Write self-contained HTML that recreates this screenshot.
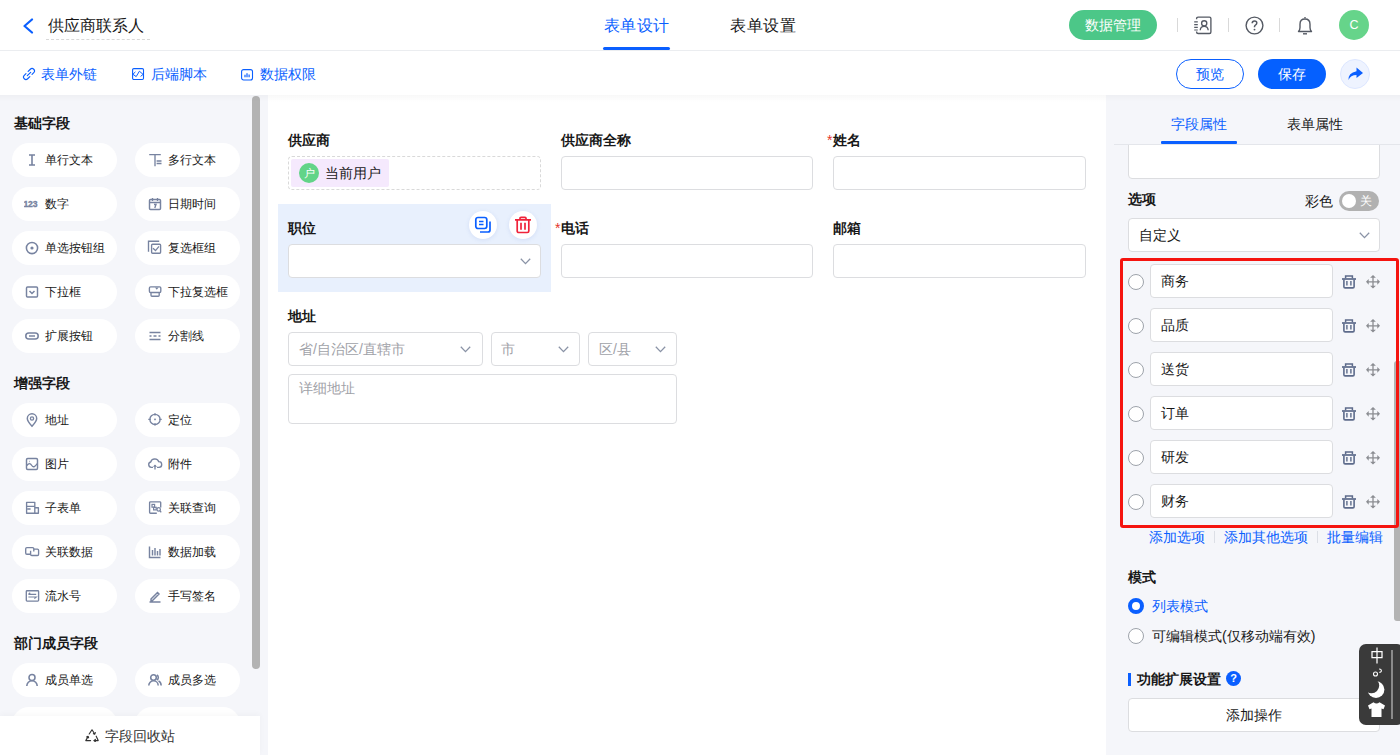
<!DOCTYPE html>
<html><head><meta charset="utf-8">
<style>
*{box-sizing:border-box;margin:0;padding:0}
html,body{width:1400px;height:755px;overflow:hidden;background:#fff;font-family:"Liberation Sans",sans-serif;color:#181818;position:relative}
.a{position:absolute}
svg{display:block}
/* header */
#hdr{left:0;top:0;width:1400px;height:51px;border-bottom:1px solid #ebedf0;background:#fff}
#tb{left:0;top:51px;width:1400px;height:44px;background:#fff}
#left{left:0;top:95px;width:268px;height:660px;background:#f5f6fa}
#canvas{left:268px;top:95px;width:838px;height:660px;background:#fff}
#right{left:1106px;top:95px;width:294px;height:660px;background:#f5f6fa}
.shadow{left:0;top:95px;width:1400px;height:7px;background:linear-gradient(rgba(0,0,0,0.028),rgba(0,0,0,0))}
.t14{font-size:14px;line-height:20px;white-space:nowrap}
.t13{font-size:13px;line-height:18px;white-space:nowrap}
.t16{font-size:16px;line-height:22px;white-space:nowrap}
.b{font-weight:bold}
.blue{color:#0a5fff}
.pill{width:105px;height:34px;border-radius:17px;background:#fff}
.pill .ic{position:absolute;left:12px;top:9px;width:16px;height:16px}
.pill span{position:absolute;left:33px;top:8px;font-size:12px;line-height:18px;color:#181818;white-space:nowrap}
.sec{left:14px;font-size:14px;font-weight:bold;line-height:18px;color:#181818}
.inp{border:1px solid #dcdde0;border-radius:4px;background:#fff}
.lbl{font-size:14px;font-weight:bold;line-height:20px;color:#181818;white-space:nowrap}
.req{color:#e5352b;font-weight:normal;margin-right:1px}
.chev{position:absolute;width:12px;height:12px}
</style></head><body>

<!-- header -->
<div id="hdr" class="a"></div>
<div class="a" style="left:20.5px;top:17.5px"><svg width="14" height="16" viewBox="0 0 14 16"><path d="M11 1.5 L3.5 8 L11 14.5" fill="none" stroke="#0a5fff" stroke-width="2.2" stroke-linecap="round" stroke-linejoin="round"/></svg></div>
<div class="a t16" style="left:48px;top:15px;color:#181818">供应商联系人</div>
<div class="a" style="left:46px;top:39px;width:104px;border-top:1px dashed #d8d8d8"></div>

<div class="a t16 blue" style="left:603.5px;top:15px;letter-spacing:0.5px">表单设计</div>
<div class="a" style="left:603px;top:47px;width:67px;height:3px;background:#0a5fff;border-radius:2px"></div>
<div class="a t16" style="left:730px;top:15px;letter-spacing:0.6px;color:#181818">表单设置</div>

<div class="a" style="left:1069px;top:10px;width:88px;height:30px;border-radius:15px;background:#4cc788"></div>
<div class="a t14" style="left:1085px;top:15px;color:#fff;font-weight:500">数据管理</div>
<div class="a" style="left:1177px;top:18px;width:1px;height:14px;background:#d9d9d9"></div>
<div class="a" style="left:1228px;top:18px;width:1px;height:14px;background:#d9d9d9"></div>
<div class="a" style="left:1279px;top:18px;width:1px;height:14px;background:#d9d9d9"></div>
<div class="a" style="left:1339px;top:10px;width:30px;height:30px;border-radius:50%;background:#66d48a;color:#fff;font-size:12.5px;line-height:31px;text-align:center">C</div>

<!-- toolbar -->
<div id="tb" class="a"></div>
<div class="a t14 blue" style="left:41px;top:64px">表单外链</div>
<div class="a t14 blue" style="left:151px;top:64px">后端脚本</div>
<div class="a t14 blue" style="left:260px;top:64px">数据权限</div>
<div class="a" style="left:1176px;top:59px;width:68px;height:30px;border-radius:15px;border:1px solid #0a5fff;background:#fff"></div>
<div class="a t14 blue" style="left:1196px;top:64px">预览</div>
<div class="a" style="left:1258px;top:59px;width:68px;height:30px;border-radius:15px;background:#0560ff"></div>
<div class="a t14" style="left:1278px;top:64px;color:#fff;font-weight:500">保存</div>
<div class="a" style="left:1340px;top:59px;width:30px;height:30px;border-radius:50%;background:#eef3ff;border:1px solid #dde7ff"></div>


<div class="a" style="left:22px;top:67px"><svg width="14" height="14" viewBox="0 0 14 14"><g transform="rotate(-45 7 7)" stroke="#0a5fff" stroke-width="1.15" fill="none" stroke-linecap="round"><path d="M8.2 4.6H11.3A2.4 2.4 0 0 1 11.3 9.4H8.9"/><path d="M5.8 9.4H2.7A2.4 2.4 0 0 1 2.7 4.6H5.1"/><path d="M4.6 7H9.4"/></g></svg></div>
<div class="a" style="left:131px;top:67px"><svg width="14" height="14" viewBox="0 0 14 14"><rect x="1.6" y="1.6" width="10.9" height="10.9" rx="1.2" stroke="#0a5fff" stroke-width="1.1" fill="none"/><path d="M4.4 4.9L1.9 7.3L5.2 9.6L8.4 4.2L12.1 7.4L9.6 9.4" stroke="#0a5fff" stroke-width="1" fill="none" stroke-linejoin="round"/></svg></div>
<div class="a" style="left:240px;top:68px"><svg width="14" height="13" viewBox="0 0 14 13"><rect x="1.6" y="1.6" width="10.9" height="10.4" rx="2" stroke="#0a5fff" stroke-width="1.1" fill="none"/><path d="M5 6.8v2.4M7 5.2v4M9.1 6.4v2.8" stroke="#0a5fff" stroke-width="1.2"/></svg></div>
<div class="a" style="left:1193px;top:16px"><svg width="20" height="19" viewBox="0 0 20 19"><path d="M3.6 3.2V2.6Q3.6 1.1 5.1 1.1H16.4Q17.9 1.1 17.9 2.6V16Q17.9 17.5 16.4 17.5H5.1Q3.6 17.5 3.6 16V15.4" stroke="#555a64" stroke-width="1.35" fill="none"/><path d="M1.2 5.9h3.6M1.2 8.6h3.6M1.2 11.3h3.6M1.2 14h3.6" stroke="#555a64" stroke-width="1.2"/><circle cx="11.2" cy="7.3" r="2.6" stroke="#555a64" stroke-width="1.35" fill="none"/><path d="M7.2 14.2Q7.6 10.4 11.2 10.4Q14.8 10.4 15.2 14.2" stroke="#555a64" stroke-width="1.35" fill="none"/></svg></div>
<div class="a" style="left:1245px;top:16px"><svg width="19" height="19" viewBox="0 0 19 19"><circle cx="9.5" cy="9.5" r="8.4" stroke="#555a64" stroke-width="1.4" fill="none"/><path d="M7.2 7.3Q7.2 5 9.5 5Q11.8 5 11.8 7.1Q11.8 8.4 10.4 9.1Q9.5 9.6 9.5 10.8V11.3" stroke="#555a64" stroke-width="1.5" fill="none"/><circle cx="9.5" cy="13.6" r="0.95" fill="#555a64"/></svg></div>
<div class="a" style="left:1297px;top:16px"><svg width="16" height="19" viewBox="0 0 16 19"><path d="M8 1v1.3" stroke="#555a64" stroke-width="1.4"/><path d="M1.5 15.5Q3 14 3 11.5V8.2Q3 3 8 3Q13 3 13 8.2V11.5Q13 14 14.5 15.5z" stroke="#555a64" stroke-width="1.4" fill="none" stroke-linejoin="round"/><path d="M6 17.8h4" stroke="#555a64" stroke-width="1.4"/></svg></div>
<div class="a" style="left:1345px;top:66px"><svg width="20" height="16" viewBox="0 0 20 16"><path d="M11.5 1.5L18 7 11.5 12V9Q5.5 9 3.5 14Q3 7 11.5 5.2z" fill="#0a5fff"/></svg></div>

<!-- panels -->
<div id="left" class="a"></div>
<div class="a sec" style="top:114px">基础字段</div>
<div class="a pill" style="left:12px;top:143px"><div class="ic"><svg width="16" height="16" viewBox="0 0 16 16"><path d="M5 3h6M5 13h6M8 3v10" stroke="#7783a0" stroke-width="1.60" fill="none"/></svg></div><span>单行文本</span></div>
<div class="a pill" style="left:135px;top:143px"><div class="ic"><svg width="16" height="16" viewBox="0 0 16 16"><path d="M2.2 2.6H13.8M8 2.6V14.2M9.6 9H14.5M9.6 11.5H14.5" stroke="#7783a0" stroke-width="1.35" fill="none"/></svg></div><span>多行文本</span></div>
<div class="a pill" style="left:12px;top:187px"><div class="ic"><svg width="16" height="16" viewBox="0 0 16 16"><text x="-0.5" y="11" font-family="Liberation Sans" font-weight="bold" font-size="8.6" fill="#7783a0" stroke="#7783a0" stroke-width="0.35" letter-spacing="-0.2">123</text></svg></div><span>数字</span></div>
<div class="a pill" style="left:135px;top:187px"><div class="ic"><svg width="16" height="16" viewBox="0 0 16 16"><rect x="2.5" y="3.5" width="11" height="10" rx="1" stroke="#7783a0" stroke-width="1.45" fill="none"/><path d="M2.5 6.5h11M5.5 2v3M10.5 2v3M7 8.5h2l-1.2 3.5" stroke="#7783a0" stroke-width="1.35" fill="none"/></svg></div><span>日期时间</span></div>
<div class="a pill" style="left:12px;top:231px"><div class="ic"><svg width="16" height="16" viewBox="0 0 16 16"><circle cx="8" cy="8" r="5.6" stroke="#7783a0" stroke-width="1.55" fill="none"/><circle cx="8" cy="8" r="1.6" fill="#7783a0"/></svg></div><span>单选按钮组</span></div>
<div class="a pill" style="left:135px;top:231px"><div class="ic"><svg width="16" height="16" viewBox="0 0 16 16"><path d="M1.5 11.7V1.2H12.2" stroke="#7783a0" stroke-width="1.35" fill="none"/><rect x="4.6" y="4.2" width="9" height="9" rx="1" stroke="#7783a0" stroke-width="1.35" fill="none"/><path d="M6 8.3L8.5 10.6L12 6.3" stroke="#7783a0" stroke-width="1.3" fill="none"/></svg></div><span>复选框组</span></div>
<div class="a pill" style="left:12px;top:275px"><div class="ic"><svg width="16" height="16" viewBox="0 0 16 16"><rect x="2.5" y="3" width="11" height="10" rx="1" stroke="#7783a0" stroke-width="1.45" fill="none"/><path d="M5.5 7l2.5 2.5L10.5 7" stroke="#7783a0" stroke-width="1.45" fill="none"/></svg></div><span>下拉框</span></div>
<div class="a pill" style="left:135px;top:275px"><div class="ic"><svg width="16" height="16" viewBox="0 0 16 16"><rect x="2.4" y="2.9" width="11.4" height="5.6" rx="1.2" stroke="#7783a0" stroke-width="1.35" fill="none"/><path d="M4 8.6V11.2Q4 12.2 5 12.2H11.2Q12.2 12.2 12.2 11.2V8.6" stroke="#7783a0" stroke-width="1.35" fill="none"/><path d="M8 3.4L9.8 5.8L11.6 3.4z" fill="#7783a0"/></svg></div><span>下拉复选框</span></div>
<div class="a pill" style="left:12px;top:319px"><div class="ic"><svg width="16" height="16" viewBox="0 0 16 16"><rect x="1.8" y="5" width="12.4" height="6" rx="3" stroke="#7783a0" stroke-width="1.55" fill="none"/><path d="M5 8h6" stroke="#7783a0" stroke-width="1.45"/></svg></div><span>扩展按钮</span></div>
<div class="a pill" style="left:135px;top:319px"><div class="ic"><svg width="16" height="16" viewBox="0 0 16 16"><path d="M2.5 4.5h11M2.5 11.5h11M2.5 8h2M6.5 8h3M11.5 8h2" stroke="#7783a0" stroke-width="1.45" fill="none"/></svg></div><span>分割线</span></div>
<div class="a sec" style="top:374px">增强字段</div>
<div class="a pill" style="left:12px;top:403px"><div class="ic"><svg width="16" height="16" viewBox="0 0 16 16"><path d="M8 14.2C5 11 3.3 8.8 3.3 6.5a4.7 4.7 0 0 1 9.4 0c0 2.3-1.7 4.5-4.7 7.7z" stroke="#7783a0" stroke-width="1.45" fill="none"/><circle cx="8" cy="6.5" r="1.6" stroke="#7783a0" stroke-width="1.35" fill="none"/></svg></div><span>地址</span></div>
<div class="a pill" style="left:135px;top:403px"><div class="ic"><svg width="16" height="16" viewBox="0 0 16 16"><circle cx="8" cy="7.4" r="5.1" stroke="#7783a0" stroke-width="1.35" fill="none"/><rect x="7.2" y="6.6" width="1.6" height="1.6" fill="#7783a0"/><path d="M8 1.2V3.6M8 11.2V13.6M1.3 7.4H3.7M12.3 7.4H14.7" stroke="#7783a0" stroke-width="1.35"/></svg></div><span>定位</span></div>
<div class="a pill" style="left:12px;top:447px"><div class="ic"><svg width="16" height="16" viewBox="0 0 16 16"><rect x="2.5" y="2.5" width="11" height="11" rx="1.2" stroke="#7783a0" stroke-width="1.45" fill="none"/><path d="M2.8 9.5c2-2.5 3.5-2.5 5 0s3.5 1 5.5-2M5 5.5h.5" stroke="#7783a0" stroke-width="1.35" fill="none"/></svg></div><span>图片</span></div>
<div class="a pill" style="left:135px;top:447px"><div class="ic"><svg width="16" height="16" viewBox="0 0 16 16"><path d="M6 11.3H4.3A2.7 2.7 0 0 1 3.7 6Q4.3 3 7.8 2.8Q11 3 11.8 5.7A2.8 2.8 0 0 1 12 11.3H10" stroke="#7783a0" stroke-width="1.35" fill="none"/><path d="M8 13.6V9.3" stroke="#7783a0" stroke-width="1.35"/><path d="M5.9 10.8L8 8.6L10.1 10.8z" fill="#7783a0"/></svg></div><span>附件</span></div>
<div class="a pill" style="left:12px;top:491px"><div class="ic"><svg width="16" height="16" viewBox="0 0 16 16"><path d="M2.6 2.3H10.8V13.2H2.6zM2.6 6.3H10.8M3.4 9H6.6M10.8 7.7H14.4V13.2H10.8" stroke="#7783a0" stroke-width="1.35" fill="none" stroke-linejoin="round"/></svg></div><span>子表单</span></div>
<div class="a pill" style="left:135px;top:491px"><div class="ic"><svg width="16" height="16" viewBox="0 0 16 16"><path d="M9.8 13.2H3.5Q2.6 13.2 2.6 12.3V2.6Q2.6 1.8 3.5 1.8H12.8Q13.7 1.8 13.7 2.6V7.5" stroke="#7783a0" stroke-width="1.35" fill="none"/><rect x="5" y="4.4" width="2.6" height="2.8" stroke="#7783a0" stroke-width="1.2" fill="none"/><rect x="6.6" y="7.3" width="2.6" height="2.6" stroke="#7783a0" stroke-width="1.2" fill="none"/><circle cx="11.7" cy="9.4" r="1.7" stroke="#7783a0" stroke-width="1.2" fill="none"/><path d="M12.9 10.7L14.2 12.4" stroke="#7783a0" stroke-width="1.3"/></svg></div><span>关联查询</span></div>
<div class="a pill" style="left:12px;top:535px"><div class="ic"><svg width="16" height="16" viewBox="0 0 16 16"><path d="M6.2 10.2H2.9Q1.7 10.2 1.7 9V4.8Q1.7 3.6 2.9 3.6H8.6Q9.8 3.6 9.8 4.8V7.4" stroke="#7783a0" stroke-width="1.35" fill="none"/><path d="M10 5.1H13.4Q14.6 5.1 14.6 6.3V10.3Q14.6 11.5 13.4 11.5H7.8Q6.6 11.5 6.6 10.3V6.8" stroke="#7783a0" stroke-width="1.35" fill="none"/></svg></div><span>关联数据</span></div>
<div class="a pill" style="left:135px;top:535px"><div class="ic"><svg width="16" height="16" viewBox="0 0 16 16"><path d="M2.5 2.5v11h11M5.5 6v5.5M8 4v7.5M10.5 7v4.5M13 5v6.5" stroke="#7783a0" stroke-width="1.45" fill="none"/></svg></div><span>数据加载</span></div>
<div class="a pill" style="left:12px;top:579px"><div class="ic"><svg width="16" height="16" viewBox="0 0 16 16"><rect x="2.3" y="2.7" width="12.3" height="10.4" rx="0.8" stroke="#7783a0" stroke-width="1.35" fill="none"/><path d="M4.4 6.4L6.2 4.8M4.4 6.4H12.2M4.4 9H12.2L10.4 10.6" stroke="#7783a0" stroke-width="1.2" fill="none"/></svg></div><span>流水号</span></div>
<div class="a pill" style="left:135px;top:579px"><div class="ic"><svg width="16" height="16" viewBox="0 0 16 16"><path d="M4 11l6.5-6.5 1.5 1.5L5.5 12.5H4zM2.5 14h11" stroke="#7783a0" stroke-width="1.45" fill="none"/></svg></div><span>手写签名</span></div>
<div class="a sec" style="top:634px">部门成员字段</div>
<div class="a pill" style="left:12px;top:663px"><div class="ic"><svg width="16" height="16" viewBox="0 0 16 16"><circle cx="8" cy="5.5" r="3" stroke="#7783a0" stroke-width="1.55" fill="none"/><path d="M2.8 14a5.2 5.2 0 0 1 10.4 0" stroke="#7783a0" stroke-width="1.55" fill="none"/></svg></div><span>成员单选</span></div>
<div class="a pill" style="left:135px;top:663px"><div class="ic"><svg width="16" height="16" viewBox="0 0 16 16"><circle cx="6.5" cy="5.5" r="2.8" stroke="#7783a0" stroke-width="1.55" fill="none"/><path d="M1.8 13.5a4.7 4.7 0 0 1 9.4 0M9.8 3a2.8 2.8 0 0 1 0 5M11.5 9c1.5.6 2.5 2.2 2.7 4.5" stroke="#7783a0" stroke-width="1.55" fill="none"/></svg></div><span>成员多选</span></div>
<div class="a pill" style="left:12px;top:707px"><div class="ic"></div><span></span></div>
<div class="a pill" style="left:135px;top:707px"><div class="ic"></div><span></span></div>
<div class="a" style="left:252px;top:96px;width:8px;height:573px;border-radius:4px;background:#b3b3b3"></div>
<div class="a" style="left:0;top:716px;width:260px;height:39px;background:#fff;box-shadow:0 -2px 6px rgba(0,0,0,0.03)"></div>
<div class="a" style="left:85px;top:729px"><svg width="14" height="13" viewBox="0 0 14 13"><g stroke="#333" stroke-width="1.15" fill="none" stroke-linejoin="round" stroke-linecap="round"><path d="M4.2 5L7 0.8L9.6 4.8"/><path d="M8.4 4.6L9.8 5.1L10.3 3.6"/><path d="M11.2 7.2L13.2 11.6H9.2"/><path d="M10.4 10.4L9 11.6L10.4 12.6"/><path d="M5.6 11.6H0.8L3 7.6"/><path d="M1.6 8L3 7.4L3.6 8.8"/></g></svg></div>
<div class="a t14" style="left:105px;top:726px;color:#333">字段回收站</div>

<div id="canvas" class="a"></div>

<div class="a lbl" style="left:288px;top:130px">供应商</div>
<div class="a" style="left:288px;top:156px;width:253px;height:34px;border:1px dashed #d9d9d9;border-radius:4px"></div>
<div class="a" style="left:291px;top:159px;width:98px;height:28px;background:#f5e9fd;border-radius:2px"></div>
<div class="a" style="left:299px;top:163px;width:20px;height:20px;border-radius:50%;background:#62d488;color:#fff;font-size:11px;line-height:20px;text-align:center">户</div>
<div class="a t14" style="left:325px;top:163px;color:#181818">当前用户</div>

<div class="a lbl" style="left:561px;top:130px">供应商全称</div>
<div class="a inp" style="left:561px;top:156px;width:252px;height:34px"></div>
<div class="a lbl" style="left:827px;top:130px"><span class="req">*</span>姓名</div>
<div class="a inp" style="left:833px;top:156px;width:253px;height:34px"></div>

<div class="a" style="left:278px;top:204px;width:273px;height:88px;background:#e8f0fd"></div>
<div class="a lbl" style="left:288px;top:218px">职位</div>
<div class="a" style="left:469px;top:211px;width:28px;height:28px;border-radius:50%;background:#fff;box-shadow:0 1px 4px rgba(60,100,200,0.12)"></div>
<div class="a" style="left:474px;top:216px"><svg width="18" height="18" viewBox="0 0 18 18"><rect x="1.8" y="1.5" width="11" height="11" rx="2.2" stroke="#0a5fff" stroke-width="1.7" fill="none"/><path d="M5 5.5h4.5M5 8.5h4.5" stroke="#0a5fff" stroke-width="1.6"/><path d="M16 5.5v8.5a2 2 0 0 1-2 2H6" stroke="#0a5fff" stroke-width="1.7" fill="none"/></svg></div>
<div class="a" style="left:509px;top:211px;width:28px;height:28px;border-radius:50%;background:#fff;box-shadow:0 1px 4px rgba(60,100,200,0.12)"></div>
<div class="a" style="left:514px;top:216px"><svg width="18" height="18" viewBox="0 0 18 18"><path d="M1 3.8h16M6 3.5V2.3a1 1 0 0 1 1-1h4a1 1 0 0 1 1 1v1.2M3.2 4v11a1.5 1.5 0 0 0 1.5 1.5h8.6a1.5 1.5 0 0 0 1.5-1.5V4M7 6.8v7M11 6.8v7" stroke="#f0233a" stroke-width="1.7" fill="none"/></svg></div>
<div class="a inp" style="left:288px;top:244px;width:253px;height:34px"></div>
<div class="a" style="left:520px;top:258px"><svg width="11" height="7" viewBox="0 0 11 7"><path d="M0.8 0.8L5.5 5.6L10.2 0.8" stroke="#8a93a6" stroke-width="1.3" fill="none"/></svg></div>

<div class="a lbl" style="left:555px;top:218px"><span class="req">*</span>电话</div>
<div class="a inp" style="left:561px;top:244px;width:252px;height:34px"></div>
<div class="a lbl" style="left:833px;top:218px">邮箱</div>
<div class="a inp" style="left:833px;top:244px;width:253px;height:34px"></div>

<div class="a lbl" style="left:288px;top:306px">地址</div>
<div class="a inp" style="left:288px;top:332px;width:195px;height:34px"></div>
<div class="a t14" style="left:299px;top:339px;color:#9fa2a8">省/自治区/直辖市</div>
<div class="a" style="left:460px;top:346px"><svg width="11" height="7" viewBox="0 0 11 7"><path d="M0.8 0.8L5.5 5.6L10.2 0.8" stroke="#8a93a6" stroke-width="1.3" fill="none"/></svg></div>
<div class="a inp" style="left:491px;top:332px;width:89px;height:34px"></div>
<div class="a t14" style="left:501px;top:339px;color:#9fa2a8">市</div>
<div class="a" style="left:558px;top:346px"><svg width="11" height="7" viewBox="0 0 11 7"><path d="M0.8 0.8L5.5 5.6L10.2 0.8" stroke="#8a93a6" stroke-width="1.3" fill="none"/></svg></div>
<div class="a inp" style="left:588px;top:332px;width:89px;height:34px"></div>
<div class="a t14" style="left:599px;top:339px;color:#9fa2a8">区/县</div>
<div class="a" style="left:655px;top:346px"><svg width="11" height="7" viewBox="0 0 11 7"><path d="M0.8 0.8L5.5 5.6L10.2 0.8" stroke="#8a93a6" stroke-width="1.3" fill="none"/></svg></div>
<div class="a inp" style="left:288px;top:374px;width:389px;height:50px"></div>
<div class="a t14" style="left:299px;top:378px;color:#9fa2a8">详细地址</div>

<div id="right" class="a"></div>


<div class="a inp" style="left:1128px;top:120px;width:252px;height:59px"></div>
<div class="a" style="left:1106px;top:96px;width:294px;height:48px;background:#f5f6fa"></div>
<div class="a" style="left:1114px;top:144px;width:286px;height:1px;background:#e4e6eb"></div>
<div class="a t14 blue" style="left:1171px;top:114px">字段属性</div>
<div class="a" style="left:1161px;top:141px;width:76px;height:3px;background:#0a5fff;border-radius:1px"></div>
<div class="a t14" style="left:1287px;top:114px;color:#181818">表单属性</div>

<div class="a lbl" style="left:1128px;top:189px">选项</div>
<div class="a t14" style="left:1305px;top:191px;color:#181818">彩色</div>
<div class="a" style="left:1339px;top:191px;width:40px;height:20px;border-radius:10px;background:#b1b1b1"></div>
<div class="a" style="left:1342px;top:194px;width:14px;height:14px;border-radius:50%;background:#fff"></div>
<div class="a" style="left:1360px;top:193px;font-size:12px;font-weight:500;line-height:17px;color:#fff">关</div>
<div class="a inp" style="left:1128px;top:218px;width:252px;height:34px"></div>
<div class="a t14" style="left:1139px;top:225px;color:#181818">自定义</div>
<div class="a" style="left:1359px;top:232px"><svg width="11" height="7" viewBox="0 0 11 7"><path d="M0.8 0.8L5.5 5.6L10.2 0.8" stroke="#8a93a6" stroke-width="1.3" fill="none"/></svg></div>

<div class="a" style="left:1394px;top:361px;width:6px;height:260px;background:#b3b3b3;border-radius:3px 0 0 3px"></div>
<div class="a" style="left:1120px;top:258px;width:279px;height:270px;border:3px solid #f5140f;border-radius:3px"></div>
<div class="a" style="left:1128px;top:274px;width:16px;height:16px;border-radius:50%;border:1px solid #9ea3ab;background:#fff"></div>
<div class="a inp" style="left:1150px;top:264px;width:183px;height:34px"></div>
<div class="a t14" style="left:1161px;top:271px;color:#181818">商务</div>
<div class="a" style="left:1342px;top:274px"><svg width="14" height="15" viewBox="0 0 14 15"><path d="M3.6 4.2V1.9H10.4V4.2" stroke="#5d6b8b" stroke-width="1.5" fill="none"/><path d="M0 5H14" stroke="#5d6b8b" stroke-width="1.7"/><path d="M1.9 5.5V12.7Q1.9 13.9 3.1 13.9H10.9Q12.1 13.9 12.1 12.7V5.5" stroke="#5d6b8b" stroke-width="1.6" fill="none"/><path d="M4.9 7v4.6M8.9 7v4.6" stroke="#5d6b8b" stroke-width="1.4"/></svg></div>
<div class="a" style="left:1366px;top:275px"><svg width="14" height="14" viewBox="0 0 14 14"><path d="M7 2v9.6M2 6.8h10" stroke="#8b8d92" stroke-width="1.3"/><path d="M7 0L4.1 2.7h5.8zM7 13.4L4.1 10.7h5.8zM0 6.8L2.7 3.9v5.8zM14 6.8L11.3 3.9v5.8z" fill="#8b8d92"/></svg></div>
<div class="a" style="left:1128px;top:318px;width:16px;height:16px;border-radius:50%;border:1px solid #9ea3ab;background:#fff"></div>
<div class="a inp" style="left:1150px;top:308px;width:183px;height:34px"></div>
<div class="a t14" style="left:1161px;top:315px;color:#181818">品质</div>
<div class="a" style="left:1342px;top:318px"><svg width="14" height="15" viewBox="0 0 14 15"><path d="M3.6 4.2V1.9H10.4V4.2" stroke="#5d6b8b" stroke-width="1.5" fill="none"/><path d="M0 5H14" stroke="#5d6b8b" stroke-width="1.7"/><path d="M1.9 5.5V12.7Q1.9 13.9 3.1 13.9H10.9Q12.1 13.9 12.1 12.7V5.5" stroke="#5d6b8b" stroke-width="1.6" fill="none"/><path d="M4.9 7v4.6M8.9 7v4.6" stroke="#5d6b8b" stroke-width="1.4"/></svg></div>
<div class="a" style="left:1366px;top:319px"><svg width="14" height="14" viewBox="0 0 14 14"><path d="M7 2v9.6M2 6.8h10" stroke="#8b8d92" stroke-width="1.3"/><path d="M7 0L4.1 2.7h5.8zM7 13.4L4.1 10.7h5.8zM0 6.8L2.7 3.9v5.8zM14 6.8L11.3 3.9v5.8z" fill="#8b8d92"/></svg></div>
<div class="a" style="left:1128px;top:362px;width:16px;height:16px;border-radius:50%;border:1px solid #9ea3ab;background:#fff"></div>
<div class="a inp" style="left:1150px;top:352px;width:183px;height:34px"></div>
<div class="a t14" style="left:1161px;top:359px;color:#181818">送货</div>
<div class="a" style="left:1342px;top:362px"><svg width="14" height="15" viewBox="0 0 14 15"><path d="M3.6 4.2V1.9H10.4V4.2" stroke="#5d6b8b" stroke-width="1.5" fill="none"/><path d="M0 5H14" stroke="#5d6b8b" stroke-width="1.7"/><path d="M1.9 5.5V12.7Q1.9 13.9 3.1 13.9H10.9Q12.1 13.9 12.1 12.7V5.5" stroke="#5d6b8b" stroke-width="1.6" fill="none"/><path d="M4.9 7v4.6M8.9 7v4.6" stroke="#5d6b8b" stroke-width="1.4"/></svg></div>
<div class="a" style="left:1366px;top:363px"><svg width="14" height="14" viewBox="0 0 14 14"><path d="M7 2v9.6M2 6.8h10" stroke="#8b8d92" stroke-width="1.3"/><path d="M7 0L4.1 2.7h5.8zM7 13.4L4.1 10.7h5.8zM0 6.8L2.7 3.9v5.8zM14 6.8L11.3 3.9v5.8z" fill="#8b8d92"/></svg></div>
<div class="a" style="left:1128px;top:406px;width:16px;height:16px;border-radius:50%;border:1px solid #9ea3ab;background:#fff"></div>
<div class="a inp" style="left:1150px;top:396px;width:183px;height:34px"></div>
<div class="a t14" style="left:1161px;top:403px;color:#181818">订单</div>
<div class="a" style="left:1342px;top:406px"><svg width="14" height="15" viewBox="0 0 14 15"><path d="M3.6 4.2V1.9H10.4V4.2" stroke="#5d6b8b" stroke-width="1.5" fill="none"/><path d="M0 5H14" stroke="#5d6b8b" stroke-width="1.7"/><path d="M1.9 5.5V12.7Q1.9 13.9 3.1 13.9H10.9Q12.1 13.9 12.1 12.7V5.5" stroke="#5d6b8b" stroke-width="1.6" fill="none"/><path d="M4.9 7v4.6M8.9 7v4.6" stroke="#5d6b8b" stroke-width="1.4"/></svg></div>
<div class="a" style="left:1366px;top:407px"><svg width="14" height="14" viewBox="0 0 14 14"><path d="M7 2v9.6M2 6.8h10" stroke="#8b8d92" stroke-width="1.3"/><path d="M7 0L4.1 2.7h5.8zM7 13.4L4.1 10.7h5.8zM0 6.8L2.7 3.9v5.8zM14 6.8L11.3 3.9v5.8z" fill="#8b8d92"/></svg></div>
<div class="a" style="left:1128px;top:450px;width:16px;height:16px;border-radius:50%;border:1px solid #9ea3ab;background:#fff"></div>
<div class="a inp" style="left:1150px;top:440px;width:183px;height:34px"></div>
<div class="a t14" style="left:1161px;top:447px;color:#181818">研发</div>
<div class="a" style="left:1342px;top:450px"><svg width="14" height="15" viewBox="0 0 14 15"><path d="M3.6 4.2V1.9H10.4V4.2" stroke="#5d6b8b" stroke-width="1.5" fill="none"/><path d="M0 5H14" stroke="#5d6b8b" stroke-width="1.7"/><path d="M1.9 5.5V12.7Q1.9 13.9 3.1 13.9H10.9Q12.1 13.9 12.1 12.7V5.5" stroke="#5d6b8b" stroke-width="1.6" fill="none"/><path d="M4.9 7v4.6M8.9 7v4.6" stroke="#5d6b8b" stroke-width="1.4"/></svg></div>
<div class="a" style="left:1366px;top:451px"><svg width="14" height="14" viewBox="0 0 14 14"><path d="M7 2v9.6M2 6.8h10" stroke="#8b8d92" stroke-width="1.3"/><path d="M7 0L4.1 2.7h5.8zM7 13.4L4.1 10.7h5.8zM0 6.8L2.7 3.9v5.8zM14 6.8L11.3 3.9v5.8z" fill="#8b8d92"/></svg></div>
<div class="a" style="left:1128px;top:494px;width:16px;height:16px;border-radius:50%;border:1px solid #9ea3ab;background:#fff"></div>
<div class="a inp" style="left:1150px;top:484px;width:183px;height:34px"></div>
<div class="a t14" style="left:1161px;top:491px;color:#181818">财务</div>
<div class="a" style="left:1342px;top:494px"><svg width="14" height="15" viewBox="0 0 14 15"><path d="M3.6 4.2V1.9H10.4V4.2" stroke="#5d6b8b" stroke-width="1.5" fill="none"/><path d="M0 5H14" stroke="#5d6b8b" stroke-width="1.7"/><path d="M1.9 5.5V12.7Q1.9 13.9 3.1 13.9H10.9Q12.1 13.9 12.1 12.7V5.5" stroke="#5d6b8b" stroke-width="1.6" fill="none"/><path d="M4.9 7v4.6M8.9 7v4.6" stroke="#5d6b8b" stroke-width="1.4"/></svg></div>
<div class="a" style="left:1366px;top:495px"><svg width="14" height="14" viewBox="0 0 14 14"><path d="M7 2v9.6M2 6.8h10" stroke="#8b8d92" stroke-width="1.3"/><path d="M7 0L4.1 2.7h5.8zM7 13.4L4.1 10.7h5.8zM0 6.8L2.7 3.9v5.8zM14 6.8L11.3 3.9v5.8z" fill="#8b8d92"/></svg></div>

<div class="a t14 blue" style="left:1149px;top:527px">添加选项</div>
<div class="a" style="left:1214px;top:531px;width:1px;height:12px;background:#dcdfe6"></div>
<div class="a t14 blue" style="left:1224px;top:527px">添加其他选项</div>
<div class="a" style="left:1317px;top:531px;width:1px;height:12px;background:#dcdfe6"></div>
<div class="a t14 blue" style="left:1327px;top:527px">批量编辑</div>



<div class="a lbl" style="left:1128px;top:567px">模式</div>
<div class="a" style="left:1128px;top:598px;width:16px;height:16px;border-radius:50%;border:4.5px solid #0a5fff;background:#fff"></div>
<div class="a t14 blue" style="left:1152px;top:596px">列表模式</div>
<div class="a" style="left:1128px;top:628px;width:16px;height:16px;border-radius:50%;border:1px solid #9ea3ab;background:#fff"></div>
<div class="a t14" style="left:1152px;top:626px;color:#181818">可编辑模式(仅移动端有效)</div>

<div class="a" style="left:1128px;top:673px;width:3px;height:13px;background:#0a5fff"></div>
<div class="a lbl" style="left:1137px;top:669px">功能扩展设置</div>
<div class="a" style="left:1226px;top:671px;width:15px;height:15px;border-radius:50%;background:#0a5fff;color:#fff;font-size:11px;font-weight:bold;line-height:15px;text-align:center">?</div>
<div class="a inp" style="left:1128px;top:698px;width:252px;height:34px"></div>
<div class="a t14" style="left:1226px;top:705px;color:#181818">添加操作</div>

<div class="a" style="left:1359px;top:644px;width:45px;height:81px;border-radius:7px;background:#3a3a3a"></div>
<div class="a" style="left:1391px;top:650px;width:2px;height:69px;background:#8a8a8a"></div>
<div class="a" style="left:1370px;top:647px"><svg width="14" height="17" viewBox="0 0 14 17"><path d="M2 4.5H12V10.5H2zM7 0.5V16.5" stroke="#fff" stroke-width="1.25" fill="none"/></svg></div>
<div class="a" style="left:1372px;top:668px"><svg width="10" height="9" viewBox="0 0 10 9"><circle cx="3.5" cy="6" r="2" stroke="#fff" stroke-width="1.1" fill="none"/><path d="M7.2 1.2a1.6 1.6 0 1 1 0 3" stroke="#fff" stroke-width="1.1" fill="none"/></svg></div>
<div class="a" style="left:1367px;top:680px"><svg width="18" height="19" viewBox="0 0 18 19"><circle cx="9" cy="9.6" r="8.4" fill="#fff"/><circle cx="4.6" cy="5.6" r="7.6" fill="#3a3a3a"/></svg></div>
<div class="a" style="left:1367px;top:701px"><svg width="19" height="17" viewBox="0 0 19 17"><path d="M6.5 1.2Q9.5 4 12.5 1.2L18 4.5 16.5 8.3 14.5 7.5V16H4.5V7.5L2.5 8.3 1 4.5z" fill="#fff"/></svg></div>

<div class="a shadow"></div>
</body></html>
